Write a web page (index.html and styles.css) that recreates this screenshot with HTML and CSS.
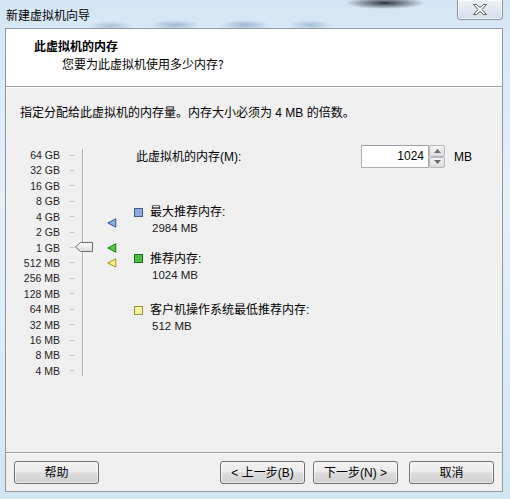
FILE: index.html
```html
<!DOCTYPE html>
<html>
<head>
<meta charset="utf-8">
<title>新建虚拟机向导</title>
<link rel="stylesheet" href="styles.css">
</head>
<body>
<div class="window">
  <div class="titlebar">
    <span class="title">新建虚拟机向导</span>
    <div class="close">
      <svg width="14" height="11" viewBox="0 0 14 11"><polygon points="0.5,0.5 3.5,0.5 7,3.5 10.5,0.5 13.5,0.5 9,5.5 13.5,10.5 10.5,10.5 7,7.5 3.5,10.5 0.5,10.5 5,5.5" fill="#ffffff" stroke="#5a5f66" stroke-width="1" stroke-linejoin="round"/></svg>
    </div>
  </div>
  <div class="client">
    <div class="header">
      <div class="h-title">此虚拟机的内存</div>
      <div class="h-sub">您要为此虚拟机使用多少内存?</div>
    </div>
    <div class="body">
      <p class="desc">指定分配给此虚拟机的内存量。内存大小必须为 4 MB 的倍数。</p>
      <div class="main">
        <div class="scale">
          <div class="rows">
            <div class="row"><span class="lbl">64 GB</span><span class="tick"></span></div>
            <div class="row"><span class="lbl">32 GB</span><span class="tick"></span></div>
            <div class="row"><span class="lbl">16 GB</span><span class="tick"></span></div>
            <div class="row"><span class="lbl">8 GB</span><span class="tick"></span></div>
            <div class="row"><span class="lbl">4 GB</span><span class="tick"></span></div>
            <div class="row"><span class="lbl">2 GB</span><span class="tick"></span></div>
            <div class="row"><span class="lbl">1 GB</span><span class="tick"></span></div>
            <div class="row"><span class="lbl">512 MB</span><span class="tick"></span></div>
            <div class="row"><span class="lbl">256 MB</span><span class="tick"></span></div>
            <div class="row"><span class="lbl">128 MB</span><span class="tick"></span></div>
            <div class="row"><span class="lbl">64 MB</span><span class="tick"></span></div>
            <div class="row"><span class="lbl">32 MB</span><span class="tick"></span></div>
            <div class="row"><span class="lbl">16 MB</span><span class="tick"></span></div>
            <div class="row"><span class="lbl">8 MB</span><span class="tick"></span></div>
            <div class="row"><span class="lbl">4 MB</span><span class="tick"></span></div>
          </div>
          <div class="track">
            <svg class="thumb" width="19" height="10" viewBox="0 0 19 10">
              <defs><linearGradient id="tg" x1="0" y1="0" x2="0" y2="1"><stop offset="0" stop-color="#ffffff"/><stop offset="1" stop-color="#d9d9d9"/></linearGradient></defs>
              <path d="M0.5,5 L5.5,0.5 H17.5 V9.5 H5.5 Z" fill="url(#tg)" stroke="#6e6e6e" stroke-width="1" stroke-linejoin="round"/>
            </svg>
          </div>
          <div class="markers">
            <svg class="marker" style="top:72.5px" width="10" height="10" viewBox="0 0 10 10"><path d="M0.8,5 L8.8,0.8 V9.2 Z" fill="#8eaddb" stroke="#2e5a96" stroke-width="1" stroke-linejoin="round"/></svg>
            <svg class="marker" style="top:97.8px" width="10" height="10" viewBox="0 0 10 10"><path d="M0.8,5 L8.8,0.8 V9.2 Z" fill="#4cd043" stroke="#1f7d1c" stroke-width="1" stroke-linejoin="round"/></svg>
            <svg class="marker" style="top:112.5px" width="10" height="10" viewBox="0 0 10 10"><path d="M0.8,5 L8.8,0.8 V9.2 Z" fill="#f7f07a" stroke="#9c962a" stroke-width="1" stroke-linejoin="round"/></svg>
          </div>
        </div>
        <div class="legend">
          <div class="mem-row">
            <span class="mem-label">此虚拟机的内存(M):</span>
            <div class="spin">
              <div class="spin-input">1024</div>
              <div class="spin-btns">
                <span class="sb"><svg width="7" height="4" viewBox="0 0 7 4"><path d="M0,4 L3.5,0 L7,4 Z" fill="#6b6b6b"/></svg></span>
                <span class="sb"><svg width="7" height="4" viewBox="0 0 7 4"><path d="M0,0 L3.5,4 L7,0 Z" fill="#6b6b6b"/></svg></span>
              </div>
            </div>
            <span class="mb">MB</span>
          </div>
          <div class="item">
            <span class="sq sq-blue"></span>
            <div class="it-text"><div class="it-title">最大推荐内存:</div><div class="it-val">2984 MB</div></div>
          </div>
          <div class="item">
            <span class="sq sq-green"></span>
            <div class="it-text"><div class="it-title">推荐内存:</div><div class="it-val">1024 MB</div></div>
          </div>
          <div class="item">
            <span class="sq sq-yellow"></span>
            <div class="it-text"><div class="it-title">客户机操作系统最低推荐内存:</div><div class="it-val">512 MB</div></div>
          </div>
        </div>
      </div>
      <div class="footer">
        <button class="btn">帮助</button>
        <div class="nav">
          <button class="btn">&lt; 上一步(B)</button>
          <button class="btn">下一步(N) &gt;</button>
          <button class="btn btn-cancel">取消</button>
        </div>
      </div>
    </div>
  </div>
</div>
</body>
</html>
```

FILE: styles.css
```css
* { box-sizing: border-box; }
html, body { margin: 0; padding: 0; }
body {
  width: 510px;
  height: 499px;
  overflow: hidden;
  font-family: "Liberation Sans", "Noto Sans CJK SC", sans-serif;
  font-size: 12px;
  color: #000;
}
.window {
  width: 510px;
  height: 499px;
  display: flex;
  flex-direction: column;
  background:
    radial-gradient(ellipse 40px 6px at 385px 3px, rgba(20,20,30,0.85), rgba(20,20,30,0) 100%),
    radial-gradient(ellipse 22px 5px at 110px 26px, rgba(90,120,160,0.35), rgba(90,120,160,0) 100%),
    radial-gradient(ellipse 25px 5px at 175px 25px, rgba(60,90,140,0.35), rgba(60,90,140,0) 100%),
    radial-gradient(ellipse 25px 5px at 245px 25px, rgba(60,90,140,0.35), rgba(60,90,140,0) 100%),
    radial-gradient(ellipse 22px 5px at 310px 25px, rgba(60,90,140,0.3), rgba(60,90,140,0) 100%),
    linear-gradient(180deg, #d4e6f5 0%, #e4eff8 40%, #d2e7f3 100%);
}
.titlebar {
  height: 28px;
  display: flex;
  align-items: flex-start;
  flex: none;
}
.title {
  padding-left: 6px;
  margin-top: 7px;
  line-height: 16px;
  font-size: 12px;
  font-family: "Noto Sans CJK SC", sans-serif;
  color: #000;
}
.close {
  margin-left: auto;
  margin-right: 7px;
  width: 46px;
  height: 20px;
  border: 1px solid #8c97a4;
  border-top: none;
  border-radius: 0 0 4px 4px;
  background: linear-gradient(180deg, #eef3f8 0%, #e0e8f1 50%, #d2dde9 100%);
  box-shadow: inset 0 0 0 1px rgba(255,255,255,0.7);
  display: flex;
  align-items: center;
  justify-content: center;
}
.client {
  flex: 1;
  margin: 0 7px 7px 5px;
  border: 1px solid #8e99a6;
  display: flex;
  flex-direction: column;
  background: #f0f0f0;
}
.header {
  height: 58px;
  flex: none;
  background: #fff;
  border-bottom: 1px solid #a0a0a0;
  padding-top: 9px;
  font-family: "Noto Sans CJK SC", sans-serif;
}
.h-title {
  padding-left: 28px;
  font-weight: bold;
  line-height: 16px;
}
.h-sub {
  padding-left: 56px;
  margin-top: 2px;
  line-height: 16px;
}
.body {
  flex: 1;
  display: flex;
  flex-direction: column;
  border-top: 1px solid #fff;
}
.desc {
  margin: 17px 0 0 14px;
  line-height: 16px;
}
.main {
  display: flex;
  margin-top: 24px;
}
.scale {
  display: flex;
  flex: none;
}
.rows {
  padding-top: 2.3px;
}
.row {
  height: 15.43px;
  display: flex;
  align-items: center;
}
.lbl {
  width: 54px;
  text-align: right;
  font-family: "Liberation Sans", sans-serif;
  font-size: 10.5px;
  color: #1e1e1e;
  line-height: 12px;
}
.tick {
  width: 4px;
  height: 1px;
  margin-left: 10px;
  background: #c4c4c4;
}
.track {
  position: relative;
  width: 2px;
  height: 227px;
  margin: 4px 0 0 8px;
  border-left: 1px solid #a9a9a9;
  border-right: 1px solid #ffffff;
  background: #d8d8d8;
}
.thumb {
  position: absolute;
  left: -8px;
  top: 93px;
  display: block;
}
.markers {
  position: relative;
  width: 10px;
  margin-left: 23px;
}
.marker {
  position: absolute;
  left: 0;
  display: block;
}
.legend {
  flex: 1;
  margin-left: 17px;
  display: flex;
  flex-direction: column;
}
.mem-row {
  display: flex;
  align-items: center;
  height: 23px;
}
.mem-label {
  flex: 1;
  padding-left: 2px;
  line-height: 16px;
}
.spin {
  display: flex;
  width: 84px;
  height: 23px;
}
.spin-input {
  width: 68px;
  border: 1px solid #abadb3;
  border-top-color: #999da4;
  background: #fff;
  text-align: right;
  padding-right: 4px;
  line-height: 21px;
  font-size: 12px;
}
.spin-btns {
  width: 16px;
  display: flex;
  flex-direction: column;
}
.sb {
  flex: 1;
  border: 1px solid #b4b7bd;
  border-radius: 2px;
  background: linear-gradient(180deg, #f4f4f4, #dcdcdc);
  display: flex;
  align-items: center;
  justify-content: center;
}
.mb {
  margin-left: 9px;
  width: 48px;
  line-height: 16px;
}
.item {
  display: flex;
  align-items: flex-start;
}
.item:nth-child(2) { margin-top: 36px; }
.item:nth-child(3) { margin-top: 14.6px; }
.item:nth-child(4) { margin-top: 19.7px; }
.sq {
  width: 9px;
  height: 9px;
  margin-top: 3.5px;
  flex: none;
  border: 1px solid;
}
.sq-blue { background: #8fa9d8; border-color: #3f5a8c; }
.sq-green { background: #46be3c; border-color: #246d20; }
.sq-yellow { background: #f8f39c; border-color: #98923a; }
.it-text { margin-left: 7px; }
.it-title { line-height: 16px; }
.it-val {
  line-height: 16px;
  padding-left: 2px;
  font-size: 11.5px;
  color: #1a1a1a;
}
.footer {
  margin-top: auto;
  height: 39px;
  border-top: 1px solid #a0a0a0;
  box-shadow: inset 0 1px 0 #ffffff;
  display: flex;
  align-items: flex-start;
  padding: 8px 8px 0 8px;
}
.nav {
  margin-left: auto;
  display: flex;
  gap: 8px;
}
.btn {
  width: 85px;
  height: 23px;
  padding: 0;
  border: 1px solid #707070;
  border-radius: 3px;
  background: linear-gradient(180deg, #f2f2f2 0%, #ebebeb 48%, #dddddd 52%, #cfcfcf 100%);
  box-shadow: inset 0 0 0 1px rgba(255,255,255,0.6);
  font-family: "Liberation Sans", "Noto Sans CJK SC", sans-serif;
  font-size: 12px;
  color: #000;
  line-height: 16px;
}
.btn-cancel { margin-left: 3px; }
```
